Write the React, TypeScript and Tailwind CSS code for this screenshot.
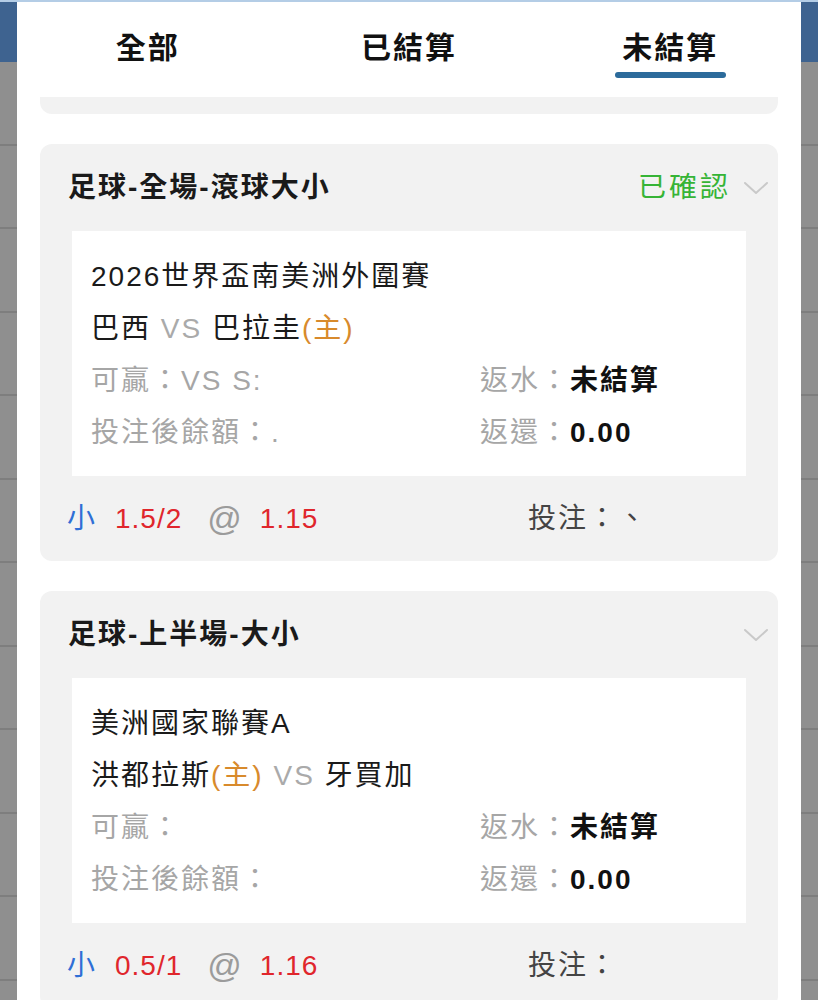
import * as React from "react";

const FONT = { fontFamily: '"Liberation Sans", "Noto Sans CJK TC", sans-serif' };

type Bet = {
  title: string;
  status?: string;
  league: string;
  home: string;
  away: string;
  homeFirst: boolean;
  win: string;
  balance: string;
  line: string;
  odds: string;
  stake: string;
};

const bets: Bet[] = [
  {
    title: "足球-全場-滾球大小",
    status: "已確認",
    league: "2026世界盃南美洲外圍賽",
    home: "巴拉圭",
    away: "巴西",
    homeFirst: false,
    win: "VS S:",
    balance: ".",
    line: "1.5/2",
    odds: "1.15",
    stake: "、",
  },
  {
    title: "足球-上半場-大小",
    league: "美洲國家聯賽A",
    home: "洪都拉斯",
    away: "牙買加",
    homeFirst: true,
    win: "",
    balance: "",
    line: "0.5/1",
    odds: "1.16",
    stake: "",
  },
];

function SideStrip() {
  return (
    <div className="flex w-[17px] shrink-0 flex-col bg-[#8f8f8f]">
      <div className="h-[60px] shrink-0 bg-[#3e6390]" />
      {Array.from({ length: 12 }).map((_, i) => (
        <div key={i} className="h-[83.5px] shrink-0 border-b-2 border-[#7e7e7e]" />
      ))}
    </div>
  );
}

function Chevron() {
  return (
    <svg width="26" height="16" viewBox="0 0 26 16" fill="none">
      <path d="M2 3 L13 13 L24 3" stroke="#c9c9c9" strokeWidth="2" strokeLinecap="round" strokeLinejoin="round" />
    </svg>
  );
}

function BetCard({ bet }: { bet: Bet }) {
  const homeTag = <span className="text-[#d88a2c]">(主)</span>;
  return (
    <div className="shrink-0 rounded-[12px] bg-[#f2f2f2]">
      <div className="flex h-[87px] items-center justify-between pl-[28px] pr-[9px]">
        <span className="text-[28px] font-bold tracking-[2px] text-[#1a1a1a]">{bet.title}</span>
        <div className="flex items-center gap-[12px]">
          {bet.status && <span className="text-[28px] tracking-[3px] text-[#36b436]">{bet.status}</span>}
          <Chevron />
        </div>
      </div>
      <div className="mx-[32px] bg-white px-[19px] pt-[20px] pb-[17px] text-[28px] leading-[52px] tracking-[2px]">
        <div className="text-[#1a1a1a]">{bet.league}</div>
        <div className="text-[#1a1a1a]">
          {bet.homeFirst ? (
            <>
              {bet.home}
              {homeTag} <span className="text-[#aaaaaa]">VS</span> {bet.away}
            </>
          ) : (
            <>
              {bet.away} <span className="text-[#aaaaaa]">VS</span> {bet.home}
              {homeTag}
            </>
          )}
        </div>
        <div className="flex">
          <div className="w-[389px] text-[#a6a6a6]">可贏：{bet.win}</div>
          <div>
            <span className="text-[#a6a6a6]">返水：</span>
            <span className="font-bold text-[#111111]">未結算</span>
          </div>
        </div>
        <div className="flex">
          <div className="w-[389px] text-[#a6a6a6]">投注後餘額：{bet.balance}</div>
          <div>
            <span className="text-[#a6a6a6]">返還：</span>
            <span className="font-bold text-[#111111]">0.00</span>
          </div>
        </div>
      </div>
      <div className="flex h-[85px] items-center pl-[27px] text-[28px] tracking-[1px]">
        <div className="flex w-[461px] items-center">
          <span className="text-[#2f6fd6]">小</span>
          <span className="ml-[19px] text-[#e0262c]">{bet.line}</span>
          <span className="ml-[25px] text-[34px] text-[#9b9b9b]">@</span>
          <span className="ml-[17px] text-[#e0262c]">{bet.odds}</span>
        </div>
        <span className="tracking-[2px] text-[#444444]">投注：{bet.stake}</span>
      </div>
    </div>
  );
}

export default function App() {
  const tabs = ["全部", "已結算", "未結算"];
  return (
    <div className="flex h-[1000px] w-[818px] flex-col overflow-hidden bg-[#8f8f8f]" style={FONT}>
      <div className="h-[2px] shrink-0 bg-[#b4cde6]" />
      <div className="flex min-h-0 flex-1">
        <SideStrip />
        <div className="flex min-w-0 flex-1 flex-col overflow-hidden bg-white">
          <div className="grid h-[95px] shrink-0 grid-cols-3">
            {tabs.map((t, i) => (
              <div key={t} className="flex flex-col items-center pt-[26px]">
                <span className="text-[30px] leading-[40px] font-bold tracking-[2px] text-[#111111]">{t}</span>
                {i === 2 && <div className="mt-[4px] h-[6px] w-[111px] rounded-full bg-[#2c6b9b]" />}
              </div>
            ))}
          </div>
          <div className="flex flex-col gap-[30px] px-[23px]">
            <div className="h-[17px] shrink-0 rounded-b-[12px] bg-[#f2f2f2]" />
            {bets.map((b) => (
              <BetCard key={b.title} bet={b} />
            ))}
          </div>
        </div>
        <SideStrip />
      </div>
    </div>
  );
}
